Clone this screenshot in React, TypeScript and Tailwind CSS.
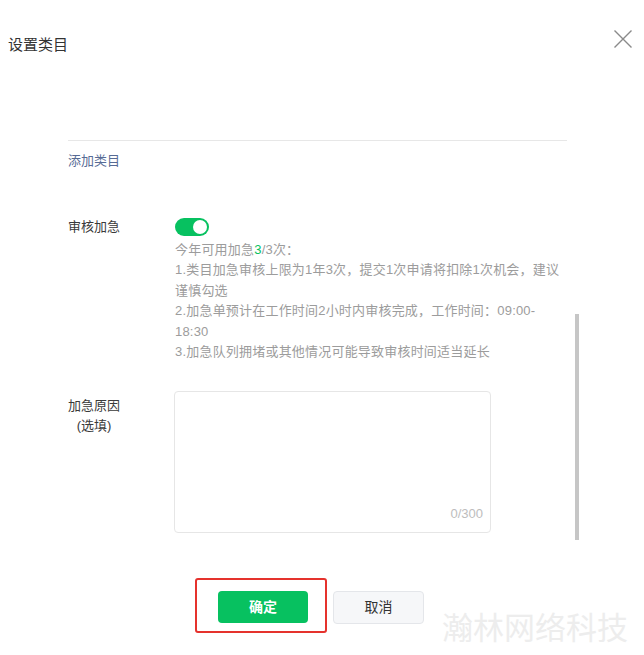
import React from "react";

const notes = [
  "1.类目加急审核上限为1年3次，提交1次申请将扣除1次机会，建议",
  "谨慎勾选",
  "2.加急单预计在工作时间2小时内审核完成，工作时间：09:00-",
  "18:30",
  "3.加急队列拥堵或其他情况可能导致审核时间适当延长",
];

const Toggle = () => (
  <div className="flex h-[18px] w-[34px] items-center justify-end rounded-full bg-[#07c160] px-[2px]">
    <div className="h-[14px] w-[14px] rounded-full bg-white" />
  </div>
);

const App: React.FC = () => {
  return (
    <div
      className="relative h-[655px] w-[644px] overflow-hidden bg-white text-[#3a3a3a]"
      style={{fontFamily: '"Liberation Sans", "Noto Sans CJK SC", sans-serif'}}
    >
      <div className="flex items-start justify-between">
        <h1 className="ml-[8px] mt-[35px] text-[15px] leading-[20px] font-normal text-[#333]">设置类目</h1>
        <svg className="mr-[12px] mt-[30px]" width="18" height="18" viewBox="0 0 18 18">
          <path d="M0.5 0.5 17.5 17.5 M17.5 0.5 0.5 17.5" stroke="#8a8a8a" strokeWidth="1.4" fill="none" />
        </svg>
      </div>

      <div className="ml-[68px] mt-[85px] w-[499px]">
        <div className="h-px bg-[#e7e7e7]" />
        <div className="mt-[10px] text-[13px] leading-[20px] text-[#576b95]">添加类目</div>

        <div className="mt-[47px] flex">
          <div className="w-[107px] text-[13px] leading-[18px]">审核加急</div>
          <div className="flex flex-col">
            <Toggle />
            <div className="mt-[4px] text-[13px] leading-[20.4px] tracking-[0.2px] text-[#9c9c9c]">
              <p>
                今年可用加急<span className="text-[#07c160]">3</span>/3次：
              </p>
              {notes.map((line) => (
                <p key={line} className="whitespace-nowrap">
                  {line}
                </p>
              ))}
            </div>
          </div>
        </div>

        <div className="mt-[29px] flex">
          <div className="w-[106px] pt-[5px]">
            <div className="w-[52px] text-center text-[13px] leading-[20px]">
              <p>加急原因</p>
              <p>(选填)</p>
            </div>
          </div>
          <div className="relative h-[142px] w-[317px] rounded-[4px] border border-[#e6e6e6]">
            <span className="absolute bottom-[8px] right-[7px] text-[13px] leading-[20px] text-[#bdbdbd]">0/300</span>
          </div>
        </div>

        <div className="mt-[45px] flex items-start">
          <div className="ml-[127px] rounded-[3px] border-2 border-[#e5322d] pb-[8px] pl-[21px] pr-[17px] pt-[11px]">
            <button className="h-[32px] w-[90px] rounded-[4px] bg-[#07c160] text-[14px] font-bold text-white">
              确定
            </button>
          </div>
          <button className="ml-[6px] mt-[13px] h-[33px] w-[91px] rounded-[4px] border border-[#e4e6ea] bg-[#f6f7f9] text-[14px] text-[#333]">
            取消
          </button>
        </div>
      </div>

      <div className="absolute left-[575px] top-[314px] h-[226px] w-[4px] bg-[#c6c6c6]" />

      <div className="absolute left-[442px] top-[609px] whitespace-nowrap text-[31px] leading-[40px] text-[#ededed]">
        瀚林网络科技
      </div>
    </div>
  );
};

export default App;
